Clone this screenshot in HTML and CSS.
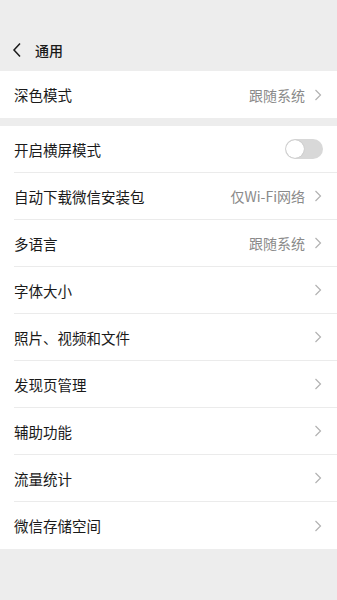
FILE: index.html
```html
<!DOCTYPE html>
<html lang="zh">
<head>
<meta charset="utf-8">
<link rel="stylesheet" href="styles.css">
</head>
<body>
<div class="page">
  <header class="topbar">
    <svg class="back" width="10" height="16" viewBox="0 0 10 16"><path d="M8 1.5 L2 8 L8 14.5" fill="none" stroke="#1a1a1a" stroke-width="1.5"/></svg>
    <span class="title">通用</span>
  </header>
  <section class="group">
    <div class="row"><span class="label">深色模式</span><span class="value">跟随系统</span><svg class="chev" width="8" height="12" viewBox="0 0 8 12"><path d="M1.5 1 L6.5 6 L1.5 11" fill="none" stroke="#b2b2b2" stroke-width="1.2"/></svg></div>
  </section>
  <section class="group">
    <div class="row"><span class="label">开启横屏模式</span><span class="switch"><span class="knob"></span></span></div>
    <div class="row"><span class="label">自动下载微信安装包</span><span class="value">仅Wi-Fi网络</span><svg class="chev" width="8" height="12" viewBox="0 0 8 12"><path d="M1.5 1 L6.5 6 L1.5 11" fill="none" stroke="#b2b2b2" stroke-width="1.2"/></svg></div>
    <div class="row"><span class="label">多语言</span><span class="value">跟随系统</span><svg class="chev" width="8" height="12" viewBox="0 0 8 12"><path d="M1.5 1 L6.5 6 L1.5 11" fill="none" stroke="#b2b2b2" stroke-width="1.2"/></svg></div>
    <div class="row"><span class="label">字体大小</span><svg class="chev" width="8" height="12" viewBox="0 0 8 12"><path d="M1.5 1 L6.5 6 L1.5 11" fill="none" stroke="#b2b2b2" stroke-width="1.2"/></svg></div>
    <div class="row"><span class="label">照片、视频和文件</span><svg class="chev" width="8" height="12" viewBox="0 0 8 12"><path d="M1.5 1 L6.5 6 L1.5 11" fill="none" stroke="#b2b2b2" stroke-width="1.2"/></svg></div>
    <div class="row"><span class="label">发现页管理</span><svg class="chev" width="8" height="12" viewBox="0 0 8 12"><path d="M1.5 1 L6.5 6 L1.5 11" fill="none" stroke="#b2b2b2" stroke-width="1.2"/></svg></div>
    <div class="row"><span class="label">辅助功能</span><svg class="chev" width="8" height="12" viewBox="0 0 8 12"><path d="M1.5 1 L6.5 6 L1.5 11" fill="none" stroke="#b2b2b2" stroke-width="1.2"/></svg></div>
    <div class="row"><span class="label">流量统计</span><svg class="chev" width="8" height="12" viewBox="0 0 8 12"><path d="M1.5 1 L6.5 6 L1.5 11" fill="none" stroke="#b2b2b2" stroke-width="1.2"/></svg></div>
    <div class="row"><span class="label">微信存储空间</span><svg class="chev" width="8" height="12" viewBox="0 0 8 12"><path d="M1.5 1 L6.5 6 L1.5 11" fill="none" stroke="#b2b2b2" stroke-width="1.2"/></svg></div>
  </section>
</div>
</body>
</html>
```
FILE: styles.css
```css
html, body {
  margin: 0;
  padding: 0;
  background: #ededed;
}
body {
  font-family: "Noto Sans CJK SC", "Noto Sans", sans-serif;
  color: #1a1a1a;
}
.page {
  width: 337px;
  min-height: 600px;
  background: #ededed;
}
.topbar {
  height: 71px;
  display: flex;
  align-items: center;
  padding: 29px 0 0 12px;
  box-sizing: border-box;
}
.back {
  display: block;
}
.title {
  margin-left: 13px;
  font-size: 14px;
  line-height: 20px;
  font-weight: 500;
}
.group {
  background: #fff;
  margin-bottom: 8px;
  padding-left: 14px;
}
.row {
  height: 47px;
  display: flex;
  align-items: center;
  padding-right: 15px;
  box-sizing: border-box;
  border-bottom: 1px solid #ebebeb;
}
.row:last-child {
  border-bottom: none;
}
.label {
  flex: 1;
  font-size: 14.5px;
  color: #1a1a1a;
}
.value {
  font-size: 14px;
  color: #8a8a8a;
  margin-right: 9px;
}
.chev {
  display: block;
}
.switch {
  width: 38px;
  height: 20px;
  border-radius: 10px;
  background: #d8d8d8;
  position: relative;
  margin-right: -1px;
}
.knob {
  position: absolute;
  left: 1px;
  top: 1px;
  width: 18px;
  height: 18px;
  border-radius: 50%;
  background: #fff;
  box-shadow: 0 0 1px rgba(0,0,0,0.3);
}
```
